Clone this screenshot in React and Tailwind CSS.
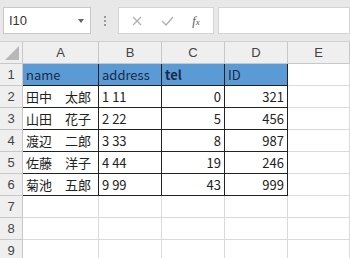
import React from "react";

const cols = ["A", "B", "C", "D", "E"];
const colW = ["w-[76px]", "w-[63px]", "w-[63px]", "w-[63px]", "flex-1"];

const rows = [
  ["name", "address", "tel", "ID"],
  ["田中　太郎", "1 11", "0", "321"],
  ["山田　花子", "2 22", "5", "456"],
  ["渡辺　二郎", "3 33", "8", "987"],
  ["佐藤　洋子", "4 44", "19", "246"],
  ["菊池　五郎", "9 99", "43", "999"],
];

const font = { fontFamily: '"Noto Sans CJK JP", "Noto Sans", sans-serif' };

function Cell({ r, c }) {
  const inTable = r < 6 && c < 4;
  const head = r === 0 && c < 4;
  const val = inTable ? rows[r][c] : "";
  const right = inTable && r > 0 && c >= 2;
  return (
    <div
      className={`${colW[c]} shrink-0 h-full box-border border-r border-b flex items-center px-[3px] text-[13px] leading-none whitespace-pre ${
        head ? "bg-[#5b9bd5] text-[#1a2a44]" : "bg-white text-[#222]"
      } ${inTable ? "border-r-[#222] border-b-[#222]" : "border-[#dadada]"} ${
        right ? "justify-end" : ""
      } ${r === 0 && c === 2 ? "font-bold" : ""}`}
    >
      {val}
    </div>
  );
}

export default function App() {
  return (
    <div className="w-[350px] h-[258px] overflow-hidden bg-white" style={font}>
      {/* formula bar */}
      <div className="h-[42px] bg-[#e8e8e8] flex items-center gap-0 pl-[3px] border-b border-[#d0d0d0]">
        <div className="w-[88px] h-[27px] bg-white border border-[#c8c8c8] flex items-center justify-between pl-[5px] pr-[6px]">
          <span className="text-[13px] text-[#333]" style={{ fontFamily: '"Liberation Sans", sans-serif' }}>I10</span>
          <span className="w-0 h-0 border-l-[3px] border-r-[3px] border-t-[4px] border-l-transparent border-r-transparent border-t-[#666]" />
        </div>
        <div className="w-[27px] flex flex-col items-center gap-[2px]">
          <span className="w-[2px] h-[2px] bg-[#999]" />
          <span className="w-[2px] h-[2px] bg-[#999]" />
          <span className="w-[2px] h-[2px] bg-[#999]" />
        </div>
        <div className="w-[96px] h-[27px] bg-white border border-[#d4d4d4] flex items-center justify-around px-[4px]">
          <svg width="10" height="10" viewBox="0 0 10 10">
            <path d="M1 1L9 9M9 1L1 9" stroke="#b0b0b0" strokeWidth="1.3" />
          </svg>
          <svg width="13" height="10" viewBox="0 0 13 10">
            <path d="M1 5L5 9L12 1" stroke="#b0b0b0" strokeWidth="1.4" fill="none" />
          </svg>
          <span className="text-[12px] italic text-[#555]" style={{ fontFamily: '"Liberation Serif", serif' }}>
            f<span className="text-[9px]">x</span>
          </span>
        </div>
        <div className="flex-1 h-[27px] ml-[4px] bg-white border border-[#d4d4d4]" />
      </div>

      {/* column headers */}
      <div className="flex h-[22px] bg-[#efefef] border-b border-[#c8c8c8]">
        <div className="w-[23px] shrink-0 border-r border-[#c8c8c8] relative">
          <svg className="absolute right-[3px] bottom-[3px]" width="14" height="14" viewBox="0 0 14 14">
            <path d="M14 0L14 14L0 14Z" fill="#b8b8b8" />
          </svg>
        </div>
        {cols.map((c, i) => (
          <div
            key={c}
            className={`${colW[i]} shrink-0 border-r border-[#c8c8c8] flex items-center justify-center text-[13px] text-[#444]`}
            style={{ fontFamily: '"Liberation Sans", sans-serif' }}
          >
            {c}
          </div>
        ))}
      </div>

      {/* rows */}
      {Array.from({ length: 9 }).map((_, r) => (
        <div key={r} className="flex h-[22px]">
          <div className="w-[23px] shrink-0 bg-[#efefef] border-r border-b border-[#c8c8c8] flex items-center justify-center text-[13px] text-[#444]" style={{ fontFamily: '"Liberation Sans", sans-serif' }}>
            {r + 1}
          </div>
          {cols.map((c, i) => (
            <Cell key={c} r={r} c={i} />
          ))}
        </div>
      ))}
    </div>
  );
}
